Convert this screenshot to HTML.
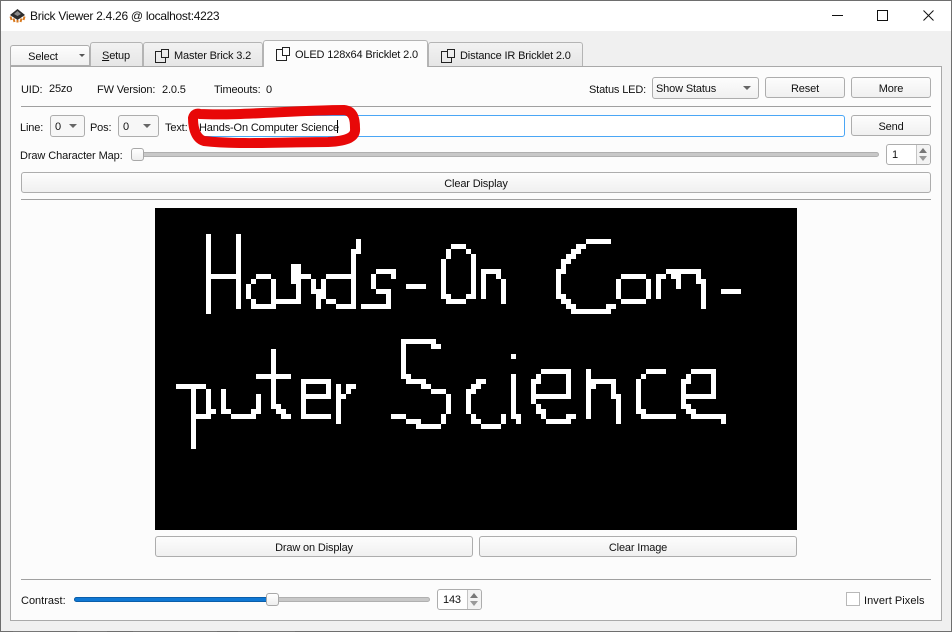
<!DOCTYPE html>
<html><head><meta charset="utf-8"><style>
html,body{margin:0;padding:0;width:952px;height:632px;overflow:hidden;background:#fff}
*{box-sizing:border-box}
body{position:relative;font-family:"Liberation Sans",sans-serif;font-size:11px;letter-spacing:-.15px;color:#111}
.a{position:absolute}
.t{position:absolute;white-space:nowrap;line-height:14px}
.b{position:absolute;display:flex;align-items:center;justify-content:center;padding-top:2px;border:1px solid #adadad;border-radius:3px;background:linear-gradient(#fdfdfd,#f0f0f0);white-space:nowrap}
.c{position:absolute;border:1px solid #adadad;border-radius:3px;background:linear-gradient(#fdfdfd,#f0f0f0);line-height:23px;padding-left:3px}
.c:after{content:"";position:absolute;right:7px;top:8px;border-left:4px solid transparent;border-right:4px solid transparent;border-top:4px solid #666}
.hr{position:absolute;left:21px;width:910px;height:1px;background:#a0a0a0}
.tab{position:absolute;top:42px;height:24px;border:1px solid #b4b4b4;border-bottom:none;border-radius:3px 3px 0 0;background:linear-gradient(#f2f2f2,#e6e6e6);line-height:27px;white-space:nowrap}
.sp{position:absolute;border:1px solid #adadad;border-radius:3px;background:#fff;height:21px;width:45px;line-height:21px;padding-left:5px}
.sp i{position:absolute;right:0;top:0;bottom:0;width:14px;border-left:1px solid #c4c4c4;background:#f3f3f3;border-radius:0 3px 3px 0}
.sp i:before{content:"";position:absolute;left:2px;top:3px;border-left:4px solid transparent;border-right:4px solid transparent;border-bottom:5px solid #777}
.sp i:after{content:"";position:absolute;left:2px;bottom:3px;border-left:4px solid transparent;border-right:4px solid transparent;border-top:5px solid #999}
.h{position:absolute;width:13px;height:13px;border:1px solid #a8a8a8;border-radius:3px;background:linear-gradient(#fff,#eee)}
</style></head><body>
<div class="a" style="left:0;top:0;width:952px;height:632px;background:#f0f0f0;border:1px solid #6e6e6e"></div>
<div class="a" style="left:1px;top:1px;width:950px;height:30px;background:#fff"></div>
<div class="a" style="left:13px;top:631px;width:27px;height:1px;background:#777"></div>
<div class="a" style="left:77px;top:631px;width:30px;height:1px;background:#777"></div>
<div class="a" style="left:133px;top:631px;width:84px;height:1px;background:#777"></div>
<div class="a" style="left:238px;top:631px;width:57px;height:1px;background:#777"></div>

<svg class="a" style="left:9px;top:8px" width="17" height="15" viewBox="0 0 17 15"><path d="M1 7L8.500 1 16 7 8.500 12z" fill="#2c2c2c"/><path d="M5 6L8.500 3 12 6 8.500 8z" fill="#8a8a8a"/><path d="M1.500 8.500l1 3.500M4.500 10.500l1 3.500M8.500 12v2.500M12.500 10.500l-1 3.500M15.500 8.500l-1 3.500" stroke="#d87a20" stroke-width="2" fill="none"/></svg>
<div class="t" style="left:30px;top:9px;font-size:12px;letter-spacing:-.28px">Brick Viewer 2.4.26 @ localhost:4223</div>
<svg class="a" style="left:830px;top:8px" width="112" height="16" viewBox="0 0 112 16" fill="none" stroke="#111" stroke-width="1"><path d="M2 7.500H13"/><path d="M47.500 2.500h10v10h-10z"/><path d="M93.500 2.500L103.500 12.500M103.500 2.500L93.500 12.500"/></svg>

<div class="a" style="left:10px;top:66px;width:932px;height:555px;background:#fcfcfc;border:1px solid #a9a9a9"></div>

<div class="b" style="left:10px;top:45px;width:80px;height:21px;border-radius:3px 3px 0 0;padding-right:14px;padding-top:2px">Select</div>
<div class="a" style="left:79px;top:54px;border-left:3px solid transparent;border-right:3px solid transparent;border-top:3px solid #555"></div>
<div class="tab" style="left:90px;width:53px;padding-left:11px"><u>S</u>etup</div>
<div class="tab" style="left:143px;width:120px;padding-left:30px">Master Brick 3.2</div>
<div class="tab" style="left:263px;top:40px;height:27px;width:165px;padding-left:31px;background:#fcfcfc;line-height:29px">OLED 128x64 Bricklet 2.0</div>
<div class="tab" style="left:428px;width:155px;padding-left:31px">Distance IR Bricklet 2.0</div>
<svg class="a" style="left:155px;top:49px" width="14" height="14" fill="none" stroke="#222"><path d="M6.500 2.500H.5v11h10v-5M6.500.5h7v8h-7z"/></svg>
<svg class="a" style="left:276px;top:47px" width="14" height="14" fill="none" stroke="#222"><path d="M6.500 2.500H.5v11h10v-5M6.500.5h7v8h-7z"/></svg>
<svg class="a" style="left:441px;top:49px" width="14" height="14" fill="none" stroke="#222"><path d="M6.500 2.500H.5v11h10v-5M6.500.5h7v8h-7z"/></svg>

<div class="t" style="left:21px;top:83px">UID:</div>
<div class="t" style="left:49px;top:82px">25zo</div>
<div class="t" style="left:97px;top:83px">FW Version:</div>
<div class="t" style="left:162px;top:83px">2.0.5</div>
<div class="t" style="left:214px;top:83px">Timeouts:</div>
<div class="t" style="left:266px;top:83px">0</div>
<div class="t" style="left:589px;top:83px">Status LED:</div>
<div class="c" style="left:652px;top:77px;width:107px;height:22px">Show Status</div>
<div class="b" style="left:765px;top:77px;width:80px;height:21px">Reset</div>
<div class="b" style="left:851px;top:77px;width:80px;height:21px">More</div>
<div class="hr" style="top:106px"></div>

<div class="t" style="left:20px;top:121px">Line:</div>
<div class="c" style="left:50px;top:115px;width:35px;height:22px;background:#f7f7f7;padding-left:4px">0</div>
<div class="t" style="left:90px;top:121px">Pos:</div>
<div class="c" style="left:118px;top:115px;width:41px;height:22px;background:#f7f7f7;padding-left:4px">0</div>
<div class="t" style="left:165px;top:121px">Text:</div>
<div class="a" style="left:197px;top:115px;width:648px;height:22px;background:#fff;border:1px solid #4aa6f5;border-radius:3px"></div>
<div class="t" style="left:199px;top:121px">Hands-On Computer Science</div>
<div class="a" style="left:337px;top:120px;width:1px;height:13px;background:#000"></div>
<div class="b" style="left:851px;top:115px;width:80px;height:21px">Send</div>

<div class="t" style="left:20px;top:149px;letter-spacing:-.1px">Draw Character Map:</div>
<div class="a" style="left:131px;top:152px;width:748px;height:5px;background:#c8c8c8;border:1px solid #b0b0b0;border-radius:3px"></div>
<div class="h" style="left:131px;top:148px"></div>
<div class="sp" style="left:886px;top:144px">1<i></i></div>
<div class="b" style="left:21px;top:172px;width:910px;height:21px">Clear Display</div>
<div class="hr" style="top:199px"></div>

<div class="a" style="left:155px;top:208px;width:642px;height:322px;background:#000"></div>
<svg class="a" style="left:156px;top:209px" width="640" height="320" viewBox="0 0 128 64" shape-rendering="crispEdges"><path fill="#fff" d="M10 5h1v16h-1zM16 5h1v15h-1zM11 13h5v1h-5zM18 15h1v3h-1zM19 14h1v1h-1zM19 18h1v1h-1zM20 13h3v1h-3zM23 14h1v4h-1zM19 19h5v1h-5zM23 18h5v1h-5zM27 11h1v4h-1zM28 11h1v8h-1zM29 13h2v1h-2zM31 14h1v3h-1zM32 16h1v4h-1zM33 14h1v4h-1zM34 13h5v1h-5zM34 18h2v1h-2zM36 19h4v1h-4zM39 8h1v12h-1zM40 6h1v3h-1zM44 12h4v1h-4zM47 13h1v1h-1zM43 13h1v3h-1zM44 16h3v1h-3zM46 17h1v3h-1zM41 19h6v1h-6zM50 15h4v1h-4zM59 7h3v1h-3zM58 8h1v2h-1zM62 8h1v1h-1zM57 10h1v8h-1zM58 17h1v2h-1zM59 18h3v1h-3zM62 17h1v1h-1zM63 9h1v9h-1z"/><path fill="#fff" d="M65 12h4v1h-4zM65 13h1v5h-1zM68 12h1v2h-1zM69 14h1v5h-1zM86 6h5v1h-5zM84 7h2v1h-2zM83 8h2v1h-2zM82 9h2v1h-2zM81 10h2v1h-2zM81 11h1v2h-1zM80 12h1v6h-1zM81 17h1v2h-1zM82 18h1v2h-1zM83 19h1v2h-1zM84 20h7v1h-7zM90 19h2v1h-2zM93 13h5v1h-5zM92 14h1v4h-1zM98 14h1v4h-1zM93 18h5v1h-5zM100 13h1v5h-1zM101 13h1v1h-1zM102 12h7v1h-7zM103 13h2v1h-2zM104 14h1v2h-1zM108 13h1v2h-1zM109 14h1v6h-1zM113 16h4v1h-4z"/><path fill="#fff" d="M4 35h6v1h-6zM7 36h1v12h-1zM10 36h1v6h-1zM8 41h3v1h-3zM11 40h1v1h-1zM13 36h1v5h-1zM14 40h1v1h-1zM15 41h4v1h-4zM19 40h1v2h-1zM20 37h1v4h-1zM23 28h1v12h-1zM20 33h7v1h-7zM24 39h1v2h-1zM25 41h2v1h-2zM25 40h1v1h-1zM29 34h1v8h-1zM30 34h5v1h-5zM34 34h1v4h-1zM30 37h5v1h-5zM30 41h5v1h-5zM36 35h1v8h-1zM37 37h1v1h-1zM38 36h1v1h-1zM38 35h2v1h-2z"/><path fill="#fff" d="M49 26h7v1h-7zM55 27h2v1h-2zM49 27h1v7h-1zM50 33h1v2h-1zM51 34h3v1h-3zM53 35h2v1h-2zM55 36h3v1h-3zM58 37h1v4h-1zM57 41h1v2h-1zM52 43h5v1h-5zM50 42h3v1h-3zM47 41h3v1h-3zM62 36h1v5h-1zM63 35h2v1h-2zM63 36h1v1h-1zM64 34h2v1h-2zM63 41h1v2h-1zM64 42h1v1h-1zM65 43h4v1h-4zM69 41h1v2h-1zM71 29h1v1h-1zM71 33h1v9h-1zM72 41h1v2h-1z"/><path fill="#fff" d="M77 32h6v1h-6zM82 33h1v5h-1zM75 37h8v1h-8zM76 33h1v2h-1zM75 34h1v5h-1zM76 39h1v2h-1zM77 40h1v2h-1zM78 42h5v1h-5zM82 41h2v1h-2zM86 32h1v10h-1zM87 34h5v1h-5zM87 35h1v1h-1zM91 35h1v3h-1zM92 37h1v6h-1zM98 32h4v1h-4zM97 33h1v1h-1zM96 34h1v7h-1zM97 40h1v2h-1zM98 41h6v1h-6zM107 32h5v1h-5zM111 33h1v5h-1zM105 37h7v1h-7zM106 33h1v2h-1zM105 34h1v6h-1zM106 39h1v2h-1zM107 40h1v2h-1zM108 41h6v1h-6zM113 42h1v1h-1z"/></svg>

<div class="b" style="left:155px;top:536px;width:318px;height:21px">Draw on Display</div>
<div class="b" style="left:479px;top:536px;width:318px;height:21px">Clear Image</div>
<div class="hr" style="top:579px"></div>

<div class="t" style="left:21px;top:594px;letter-spacing:0">Contrast:</div>
<div class="a" style="left:74px;top:597px;width:356px;height:5px;background:#c8c8c8;border:1px solid #b0b0b0;border-radius:3px"></div>
<div class="a" style="left:74px;top:597px;width:194px;height:5px;background:#0f78d4;border:1px solid #0a5eaa;border-radius:3px 0 0 3px"></div>
<div class="h" style="left:266px;top:593px"></div>
<div class="sp" style="left:437px;top:589px">143<i></i></div>
<div class="a" style="left:846px;top:592px;width:14px;height:14px;background:#fff;border:1px solid #b8b8b8"></div>
<div class="t" style="left:864px;top:594px;letter-spacing:.05px">Invert Pixels</div>

<svg class="a" style="left:188px;top:104px" width="173" height="44" fill="none"><path d="M12 10C50 12 110 6 156 6C166 7 167 16 167 24C168 33 160 37 140 38C100 38 50 41 16 37C6 34 5 20 5 14C6 10 9 9 12 10Z" stroke="#e80808" stroke-width="10"/></svg>
</body></html>
